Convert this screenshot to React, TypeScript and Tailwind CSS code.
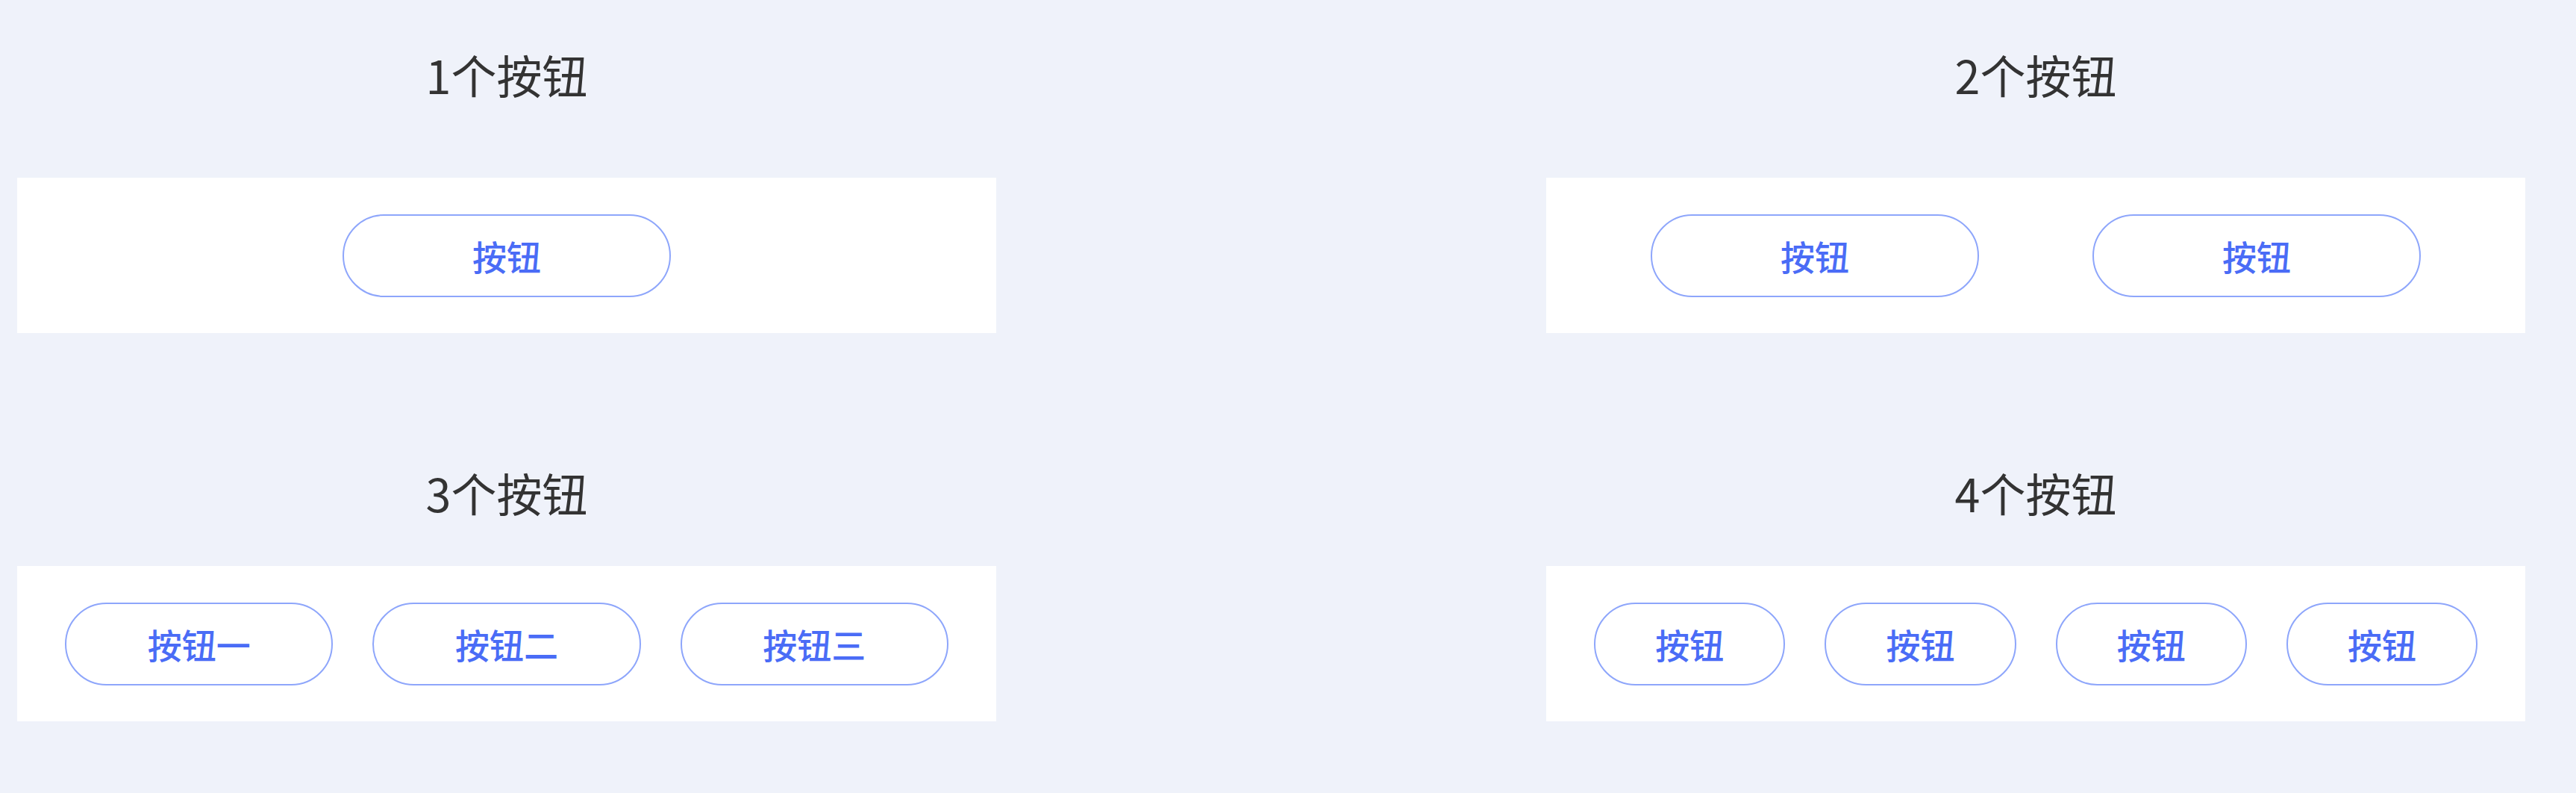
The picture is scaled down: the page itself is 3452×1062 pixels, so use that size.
const font = { fontFamily: '"PingFang SC", "Noto Sans CJK SC", "Noto Sans", sans-serif' };

function PillButton({ label, className = '' }: { label: string; className?: string }) {
  return (
    <button
      className={`h-[111px] rounded-full border-2 border-[#8ea6fb] bg-white text-[46px] font-medium text-[#4a6cf6] flex items-center justify-center ${className}`}
    >
      {label}
    </button>
  );
}

function Section({
  title,
  titleHeight,
  children,
}: {
  title: string;
  titleHeight: string;
  children: React.ReactNode;
}) {
  return (
    <div className="flex flex-col w-[1312px]">
      {/* Title */}
      <div className={`${titleHeight} flex items-center justify-center text-[61px] text-[#333333] leading-none`}>
        {title}
      </div>
      {/* Card */}
      <div className="mt-[40px] h-[208px] bg-white flex items-center">{children}</div>
    </div>
  );
}

export default function App() {
  return (
    <div className="min-h-[1062px] w-full bg-[#eff2fa] pl-[23px]" style={font}>
      <div className="grid grid-cols-[1312px_1312px] gap-x-[737px] gap-y-[154px]">
        <Section title="1个按钮" titleHeight="h-[198px]">
          <div className="flex w-full justify-center">
            <PillButton label="按钮" className="w-[440px]" />
          </div>
        </Section>

        <Section title="2个按钮" titleHeight="h-[198px]">
          <div className="flex w-full pl-[140px] gap-[152px]">
            <PillButton label="按钮" className="w-[440px]" />
            <PillButton label="按钮" className="w-[440px]" />
          </div>
        </Section>

        <Section title="3个按钮" titleHeight="h-[118px]">
          <div className="flex w-full px-[64px] gap-[53px]">
            <PillButton label="按钮一" className="flex-1" />
            <PillButton label="按钮二" className="flex-1" />
            <PillButton label="按钮三" className="flex-1" />
          </div>
        </Section>

        <Section title="4个按钮" titleHeight="h-[118px]">
          <div className="flex w-full px-[64px] gap-[53px]">
            <PillButton label="按钮" className="flex-1" />
            <PillButton label="按钮" className="flex-1" />
            <PillButton label="按钮" className="flex-1" />
            <PillButton label="按钮" className="flex-1" />
          </div>
        </Section>
      </div>
    </div>
  );
}
